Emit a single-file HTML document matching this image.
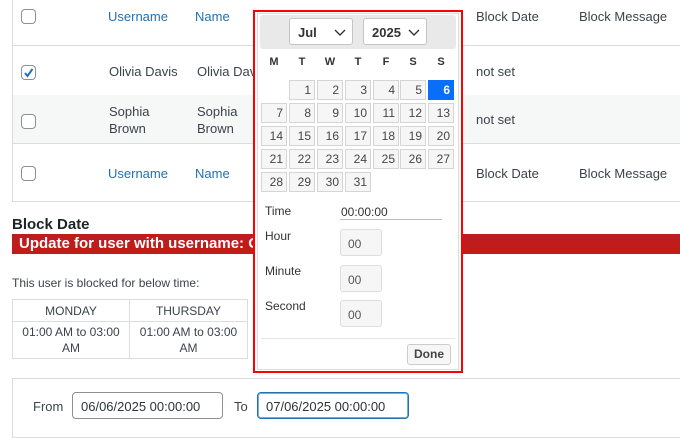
<!DOCTYPE html>
<html><head><style>
*{box-sizing:border-box;margin:0;padding:0}
body{width:680px;height:426px;overflow:hidden;background:#fff;font-family:"Liberation Sans",sans-serif;font-size:13px;color:#3c434a;position:relative}
.a{position:absolute}
.cb{position:absolute;width:15px;height:15px;border:1px solid #8c8f94;border-radius:4px;background:#fff}
.lnk{color:#2271b1}
.hl{position:absolute;left:12px;right:0;height:1px;background:#dcdcde}
.cell{position:absolute;width:26px;height:20px;background:#f6f6f6;border:1px solid #d5d5d5;text-align:right;padding-right:3px;line-height:18px;color:#454545;font-size:12px}
.dn{position:absolute;top:56px;width:26px;text-align:center;font-weight:bold;font-size:11px;color:#333}
.sel{position:absolute;top:18px;height:27px;background:#fff;border:1px solid #c5c5c5;border-radius:3px;font-weight:bold;font-size:13px;color:#333;padding:6px 0 0 8px}
.box{position:absolute;left:340px;width:42px;height:27px;background:#f6f6f6;border:1px solid #ddd;border-radius:3px;padding:7px 0 0 7px;font-size:12px;color:#555}
.lb{position:absolute;left:265px;font-size:12px;color:#333}
td{border:1px solid #dcdcde;text-align:center;font-size:12px;color:#3c434a}
</style></head><body>
<div class="a" style="left:12px;top:0;width:680px;height:202px;border:1px solid #dcdcde;border-top:none"></div>
<div class="a" style="left:13px;top:95px;width:668px;height:48px;background:#f6f7f7"></div>
<div class="hl" style="top:45px"></div>
<div class="hl" style="top:143px"></div>
<div class="cb" style="left:21px;top:9px"></div>
<div class="cb" style="left:21px;top:65px"><svg width="13" height="13" style="position:absolute;left:0;top:0"><path d="M3 7 L5.5 10 L10.5 3" stroke="#2271b1" stroke-width="2" fill="none"/></svg></div>
<div class="cb" style="left:21px;top:114px"></div>
<div class="cb" style="left:21px;top:166px"></div>
<div class="a lnk" style="left:108px;top:9px">Username</div>
<div class="a lnk" style="left:195px;top:9px">Name</div>
<div class="a lnk" style="left:108px;top:166px">Username</div>
<div class="a lnk" style="left:195px;top:166px">Name</div>
<div class="a" style="left:109px;top:64px">Olivia Davis</div>
<div class="a" style="left:197px;top:64px">Olivia Davis</div>
<div class="a" style="left:109px;top:103px;line-height:17px">Sophia<br>Brown</div>
<div class="a" style="left:197px;top:103px;line-height:17px">Sophia<br>Brown</div>
<div class="a" style="left:476px;top:9px">Block Date</div>
<div class="a" style="left:579px;top:9px">Block Message</div>
<div class="a" style="left:476px;top:64px">not set</div>
<div class="a" style="left:476px;top:112px">not set</div>
<div class="a" style="left:476px;top:166px">Block Date</div>
<div class="a" style="left:579px;top:166px">Block Message</div>
<div class="a" style="left:12px;top:216px;font-size:15px;font-weight:bold;color:#1d2327">Block Date</div>
<div class="a" style="left:12px;top:234px;width:668px;height:20px;background:#c01c1c;color:#fff;font-weight:bold;font-size:15px;padding:1px 0 0 7px;line-height:18px">Update for user with username: Olivia Davis</div>
<div class="a" style="left:12px;top:276px;font-size:12px">This user is blocked for below time:</div>
<table class="a" style="left:12px;top:299px;width:236px;border-collapse:collapse">
<tr style="height:22px"><td style="width:117px">MONDAY</td><td>THURSDAY</td></tr>
<tr style="height:37px"><td style="line-height:16px">01:00 AM to 03:00<br>AM</td><td style="line-height:16px">01:00 AM to 03:00<br>AM</td></tr>
</table>
<div class="a" style="left:12px;top:378px;width:680px;height:60px;border:1px solid #dcdcde"></div>
<div class="a" style="left:33px;top:399px">From</div>
<div class="a" style="left:72px;top:392px;width:151px;height:27px;border:1px solid #8c8f94;border-radius:4px;padding:6px 0 0 8px;color:#2c3338">06/06/2025 00:00:00</div>
<div class="a" style="left:234px;top:399px">To</div>
<div class="a" style="left:257px;top:392px;width:152px;height:27px;border:1px solid #2271b1;border-radius:4px;padding:6px 0 0 8px;color:#2c3338;box-shadow:0 0 0 1px #72aee6 inset">07/06/2025 00:00:00</div>
<div class="a" style="left:253px;top:10px;width:210px;height:363px;border:2px solid #f00;background:#fff"></div>
<div class="a" style="left:257px;top:13px;width:202px;height:357px;border:1px solid #ddd;background:#fff"></div>
<div class="a" style="left:260px;top:15px;width:196px;height:34px;background:#e9e9e9;border-radius:3px"></div>
<div class="sel" style="left:289px;width:64px">Jul<svg width="12" height="8" style="position:absolute;right:6px;top:10px"><path d="M1 1 L6 6 L11 1" stroke="#333" stroke-width="1.4" fill="none"/></svg></div>
<div class="sel" style="left:363px;width:64px">2025<svg width="12" height="8" style="position:absolute;right:6px;top:10px"><path d="M1 1 L6 6 L11 1" stroke="#333" stroke-width="1.4" fill="none"/></svg></div>
<div class="dn" style="left:261px">M</div><div class="dn" style="left:289px">T</div><div class="dn" style="left:317px">W</div><div class="dn" style="left:345px">T</div><div class="dn" style="left:373px">F</div><div class="dn" style="left:400px">S</div><div class="dn" style="left:428px">S</div>
<div id="cal"></div>
<script>
var xs=[261,289,317,345,373,400,428],ys=[80,103,126,149,172],h='';
for(var d=1;d<=31;d++){var c=d%7,r=Math.floor(d/7);
var st=d==6?'background:#0a6efd;border-color:#0a6efd;color:#fff;font-weight:bold':'';
h+='<div class="cell" style="left:'+xs[c]+'px;top:'+ys[r]+'px;'+st+'">'+d+'</div>';}
document.getElementById('cal').innerHTML=h;
</script>
<div class="lb" style="top:204px">Time</div>
<div class="a" style="left:340px;top:205px;width:102px;height:15px;border-bottom:1px solid #bbb;font-size:12px;color:#333;padding-left:1px">00:00:00</div>
<div class="lb" style="top:229px">Hour</div>
<div class="box" style="top:229px">00</div>
<div class="lb" style="top:264px">Minute</div>
<div class="box" style="top:265px">00</div>
<div class="lb" style="top:299px">Second</div>
<div class="box" style="top:300px">00</div>
<div class="a" style="left:261px;top:338px;width:194px;height:1px;background:#e5e5e5"></div>
<div class="a" style="left:407px;top:344px;width:44px;height:21px;background:#f6f6f6;border:1px solid #ccc;border-radius:3px;font-weight:bold;font-size:12px;color:#454545;text-align:center;line-height:19px">Done</div>
</body></html>
